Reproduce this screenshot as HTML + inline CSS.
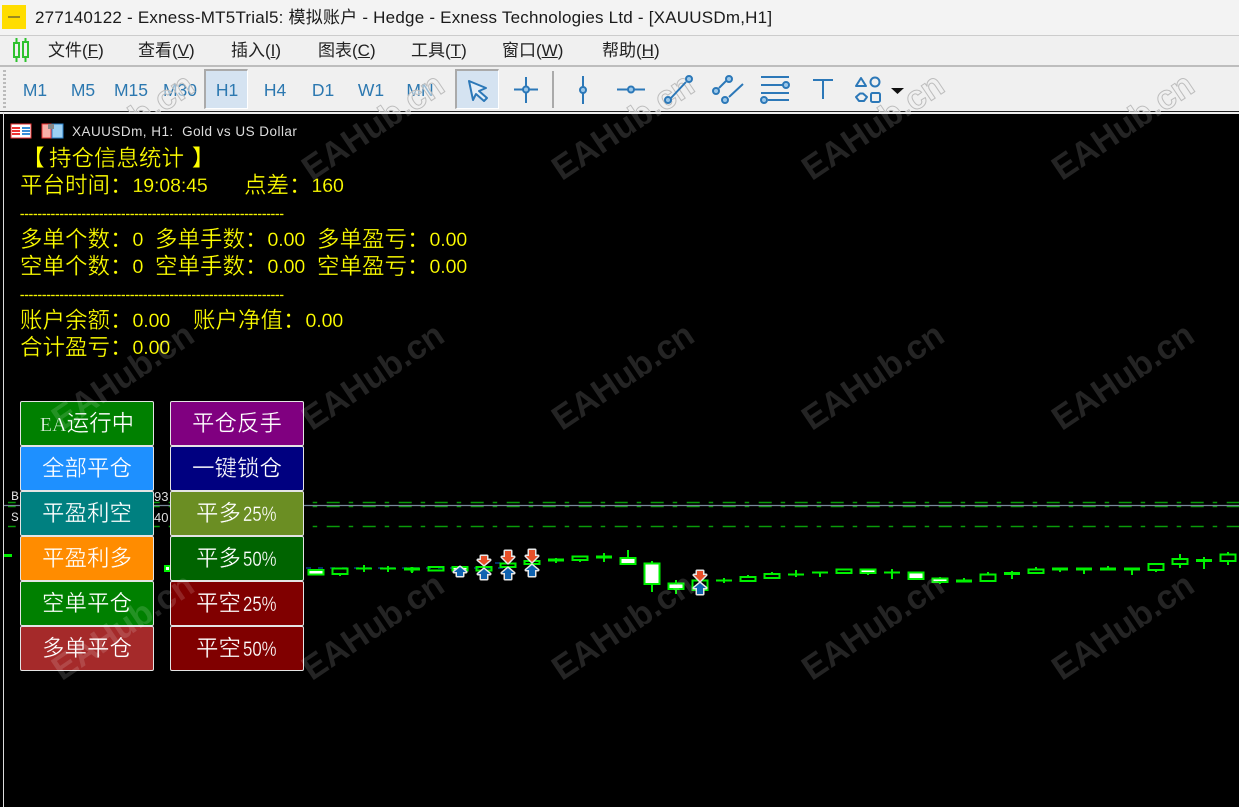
<!DOCTYPE html>
<html lang="zh"><head><meta charset="utf-8"><title>MT5</title>
<style>
html,body{margin:0;padding:0;background:#000}
#p{position:relative;width:1239px;height:807px;overflow:hidden;background:#000;font-family:"Liberation Sans","Noto Sans CJK SC",sans-serif}
#p div{position:absolute;white-space:nowrap}
.m{top:40px;font-size:17px;color:#222;line-height:22px}
.t{top:79px;width:44px;text-align:center;font-size:17.500px;line-height:22px;color:#2c78b0;margin-left:-22px}
.y{color:#ff0;font-size:22.500px;line-height:26px;font-family:"Noto Sans CJK SC",sans-serif;font-weight:400;-webkit-text-stroke:.3px #000}
.y i{font:400 19.500px/26px "Liberation Sans",sans-serif;letter-spacing:-.1px;-webkit-text-stroke:.15px #000;position:relative;top:-1px}
.y b{font-family:"Noto Sans CJK TC",sans-serif;font-weight:400}
.d{font:400 13px/26px "Liberation Sans",sans-serif;letter-spacing:.07px;color:#ee0;-webkit-text-stroke:.3px #ff0}
.b{box-sizing:border-box;width:134px;height:45px;border:1px solid #e4e4e4;border-radius:2px;color:#fff;text-align:center;font:400 22.500px/40px "Noto Sans CJK SC",sans-serif;-webkit-text-stroke:.35px var(--c);background:var(--c)}
.b i{display:inline-block;width:35px;text-align:left;transform:scaleX(.8);transform-origin:0 50%;font:400 21px/40px "Liberation Sans",sans-serif;-webkit-text-stroke:.25px var(--c);margin-left:2px}
.b u{text-decoration:none;font:400 20px/40px "Liberation Serif",serif}
.s{background:#d5e3f1;border-top:2px solid #aaa;border-left:2px solid #aaa;border-right:1px solid #fff;border-bottom:1px solid #fff;top:69px;width:41px;height:37px}
</style></head><body><div id="p">
<div style="left:0;top:0;width:1239px;height:111px;background:#f0f0f0"></div>
<div style="left:0;top:0;width:1239px;height:36px;background:#f3f3f3"></div>
<div style="left:0;top:35px;width:1239px;height:1px;background:#ccc"></div>
<div style="left:0;top:65px;width:1239px;height:2px;background:#bdbdbd"></div>
<div style="left:0;top:111px;width:1239px;height:1px;background:#222"></div>
<div style="left:0;top:112px;width:1239px;height:2px;background:#eee"></div>
<div style="left:3px;top:112px;width:1px;height:695px;background:#ddd"></div>

<div style="left:2px;top:5px;width:24px;height:24px;background:#ffdd00"></div>
<div style="left:8px;top:16px;width:12px;height:2px;background:#9a8a20"></div>
<div style="left:35px;top:5px;font-size:17px;line-height:26px;color:#1a1a1a;letter-spacing:.22px">277140122 - Exness-MT5Trial5: 模拟账户 - Hedge - Exness Technologies Ltd - [XAUUSDm,H1]</div>

<svg style="position:absolute;left:10px;top:38px" width="22" height="24" fill="none" stroke="#2ec22e" stroke-width="2"><rect x="4" y="5" width="5" height="14"/><rect x="13" y="4" width="5" height="15"/><path d="M6.500 0v5M6.500 19v5M15.500 0v4M15.500 19v5"/></svg>
<div class="m" style="left:48px">文件(<u>F</u>)</div>
<div class="m" style="left:138px">查看(<u>V</u>)</div>
<div class="m" style="left:231px">插入(<u>I</u>)</div>
<div class="m" style="left:318px">图表(<u>C</u>)</div>
<div class="m" style="left:411px">工具(<u>T</u>)</div>
<div class="m" style="left:502px">窗口(<u>W</u>)</div>
<div class="m" style="left:602px">帮助(<u>H</u>)</div>

<div class="s" style="left:204px"></div>
<div class="s" style="left:455px"></div>
<div style="left:3px;top:70px;width:3px;height:38px;background:repeating-linear-gradient(#bbb 0 2px,transparent 2px 4px)"></div>
<div class="t" style="left:35px">M1</div><div class="t" style="left:83px">M5</div><div class="t" style="left:131px">M15</div><div class="t" style="left:180px">M30</div><div class="t" style="left:227px">H1</div><div class="t" style="left:275px">H4</div><div class="t" style="left:323px">D1</div><div class="t" style="left:371px">W1</div><div class="t" style="left:420px">MN</div>
<div style="left:552px;top:71px;width:2px;height:37px;background:#aaa"></div>

<svg style="position:absolute;left:0;top:60px" width="1239" height="52" viewBox="0 60 1239 52" font-family="Liberation Sans,sans-serif" font-size="34" font-weight="700" fill="#f0f0f0" fill-opacity=".55" stroke="#bdbdbd" stroke-width="1" text-anchor="middle">
<text transform="translate(122 125) rotate(-34)" y="13">EAHub.cn</text><text transform="translate(372 125) rotate(-34)" y="13">EAHub.cn</text><text transform="translate(622 125) rotate(-34)" y="13">EAHub.cn</text><text transform="translate(872 125) rotate(-34)" y="13">EAHub.cn</text><text transform="translate(1122 125) rotate(-34)" y="13">EAHub.cn</text>
</svg>

<svg style="position:absolute;left:450px;top:60px" width="480" height="52" fill="none" stroke="#2c78b8" stroke-width="2">
<path d="M19 21l17 7-7 3 8 7-3 3-8-7-3 6z" stroke-linejoin="round" fill="#e3eef8"/>
<g fill="#9cc8ea">
<path d="M64 29.500h24M76 17v9M76 33v10"/><circle cx="76" cy="29.500" r="3"/>
<path d="M133 16v11M133 33v11"/><circle cx="133" cy="30" r="3"/>
<path d="M167 29.500h12M184 29.500h11"/><circle cx="181" cy="29.500" r="3"/>
<path d="M221 38l15-16"/><circle cx="218" cy="40" r="3"/><circle cx="239" cy="19" r="3"/>
<path d="M269 28l7-7M279 37l14-13"/><circle cx="266" cy="31" r="3"/><circle cx="279" cy="19" r="3"/><circle cx="275" cy="40" r="3"/>
<path d="M311 17h28M311 25h22M311 33h28M318 40h21"/><circle cx="336" cy="25" r="3"/><circle cx="314" cy="40" r="3"/>
</g>
<path d="M363 20h20M373 20v19"/>
<path d="M406 26l5-8 5 8z" stroke-linejoin="round"/><circle cx="425" cy="22" r="4.500"/><path d="M406 37l4-3.500h3l4 3.500-3 4h-5z" stroke-linejoin="round"/><rect x="421" y="33" width="9" height="9" rx="1.500"/>
<path d="M441 28h13l-6.500 6z" fill="#111" stroke="none"/>
</svg>

<!-- chart -->
<svg style="position:absolute;left:0;top:0" width="1239" height="807">
<g stroke="#0a9a0a" stroke-width="1.500" stroke-dasharray="13 9 4.500 9.500" stroke-dashoffset="5.300">
<path d="M8 502.500H1239M8 506.500H1239"/><path d="M8 526.500H1239"/>
</g>
<path d="M4 505.500H1239" stroke="#778899" stroke-width="1.300"/>
<path d="M306 568H505" stroke="#06408a" stroke-width="1.500" stroke-dasharray="5 7"/>
<path d="M495 563H505" stroke="#06408a" stroke-width="1.500" stroke-dasharray="5 6"/>
<g stroke="#00f000" fill="none" stroke-width="2">
<path d="M4 555.500H12" stroke-width="3"/>
<rect x="165" y="566" width="5" height="5" fill="#fff"/>
<rect x="308.500" y="570" width="15" height="4.500" fill="#fff"/>
<rect x="332.500" y="568.500" width="15" height="5.500"/><path d="M340 574v2"/>
<path d="M356 568.500h16M364 565v7M380 568.500h16M388 566v6"/>
<path d="M404 569h16M412 567v5" stroke-width="3"/><path d="M412 570v3"/>
<rect x="428.500" y="567" width="15" height="3.500"/>
<rect x="452.500" y="567" width="15" height="3.500" fill="#fff"/>
<rect x="476.500" y="567" width="15" height="3.500"/>
<rect x="500.500" y="563.500" width="15" height="3.500"/>
<rect x="524.500" y="561" width="15" height="3"/>
<path d="M548 560h16" stroke-width="3"/><path d="M556 558v5"/>
<rect x="572.500" y="556.500" width="15" height="3.500"/><path d="M580 560v2"/>
<path d="M596 557h16" stroke-width="3"/><path d="M604 553v9"/>
<rect x="620.500" y="558" width="15" height="6" fill="#fff"/><path d="M628 550v8"/>
<rect x="644.500" y="563.500" width="15" height="20.500" fill="#fff"/><path d="M652 561v2M652 584v8"/>
<rect x="668.500" y="583.500" width="15" height="5.500" fill="#fff"/><path d="M676 580v3M676 589v5"/>
<rect x="692.500" y="580.500" width="15" height="9.500"/>
<path d="M716 580.500h16M724 578v5"/>
<rect x="740.500" y="577" width="15" height="4"/><path d="M748 575v2"/>
<rect x="764.500" y="574" width="15" height="4"/><path d="M772 572v2"/>
<path d="M788 574.500h16M796 570v7"/>
<path d="M812 572.500h16M820 572v5"/>
<rect x="836.500" y="569.500" width="15" height="3.500"/>
<rect x="860.500" y="569.500" width="15" height="3.500" fill="#fff"/><path d="M868 573v2"/>
<path d="M884 572.500h16M892 569v10"/>
<rect x="908.500" y="572.500" width="15" height="6.500" fill="#fff"/>
<rect x="932.500" y="578.500" width="15" height="3.500" fill="#fff"/><path d="M940 577v1M940 582v2"/>
<path d="M956 581h16" stroke-width="3"/><path d="M964 578v2"/>
<rect x="980.500" y="574.500" width="15" height="6.500"/><path d="M988 572v2"/>
<path d="M1004 573.500h16" stroke-width="3"/><path d="M1012 571v8"/>
<rect x="1028.500" y="569.500" width="15" height="3.500"/><path d="M1036 567v2"/>
<path d="M1052 569h16M1076 569h16M1100 569h16M1124 569h16" stroke-width="3"/><path d="M1060 569v3M1084 569v5M1108 566v3M1132 569v6"/>
<rect x="1148.500" y="564" width="15" height="6"/><path d="M1156 570v2"/>
<rect x="1172.500" y="559" width="15" height="5"/><path d="M1180 554v5M1180 564v4"/>
<path d="M1196 560.500h16" stroke-width="3"/><path d="M1204 557v12"/>
<rect x="1220.500" y="554.500" width="15" height="6.500"/><path d="M1228 552v2M1228 561v4"/>
</g>
<g stroke="#e8e8e8" stroke-width="3" stroke-linejoin="round" paint-order="stroke">
<g fill="#0f62b0"><path d="M460 567l6 5h-3v4h-6v-4h-3z"/><path d="M484 569l6 5h-3v5h-6v-5h-3z"/><path d="M508 568l6 5h-3v6h-6v-6h-3z"/><path d="M532 565l6 5h-3v6h-6v-6h-3z"/><path d="M700 583l6 5h-3v6h-6v-6h-3z"/></g>
<g fill="#e8502a"><path d="M481 556h6v4h3l-6 5-6-5h3z"/><path d="M505 551h6v6h3l-6 6-6-6h3z"/><path d="M529 550h6v6h3l-6 6-6-6h3z"/><path d="M697 571h6v4h3l-6 6-6-6h3z"/></g>
</g>
</svg>

<div style="left:11px;top:490px;color:#ddd;font:13px/14px 'Liberation Mono',monospace">B</div>
<div style="left:11px;top:511px;color:#ddd;font:13px/14px 'Liberation Mono',monospace">S</div>
<div style="left:154px;top:490px;color:#ddd;font:13px/14px 'Liberation Sans',sans-serif">93</div>
<div style="left:154px;top:511px;color:#ddd;font:13px/14px 'Liberation Sans',sans-serif">40</div>

<svg style="position:absolute;left:10px;top:123px" width="55" height="16"><rect x="1" y="1" width="20" height="14" fill="#fff" stroke="#e33"/><path d="M2 5h8M2 8h8M2 11h8" stroke="#e33" stroke-width="2"/><path d="M12 5h8M12 8h8M12 11h8" stroke="#3a8fd8" stroke-width="2"/><rect x="32" y="1" width="9" height="14" fill="#f7b0a8" stroke="#e33"/><rect x="42" y="1" width="11" height="14" fill="#9cd0f2" stroke="#2a80c8"/><rect x="38" y="1" width="6" height="5" fill="#888"/></svg>
<div style="left:72px;top:123px;color:#ddd;font-size:13.500px;line-height:17px;letter-spacing:.47px">XAUUSDm, H1:&nbsp; Gold vs US Dollar</div>

<div class="y" style="left:22px;top:144px;-webkit-text-stroke:0">【</div><div class="y" style="left:49px;top:144px">持仓信息统计</div><div class="y" style="left:192px;top:144px;-webkit-text-stroke:0">】</div>
<div class="y" style="left:20px;top:171px">平台时间<b>：</b><i>19:08:45</i></div><div class="y" style="left:244px;top:171px">点差<b>：</b><i>160</i></div>
<div class="d" style="left:20px;top:201px">------------------------------------------------------------</div>
<div class="y" style="left:20px;top:225px">多单个数<b>：</b><i>0</i></div><div class="y" style="left:155px;top:225px">多单手数<b>：</b><i>0.00</i></div><div class="y" style="left:317px;top:225px">多单盈亏<b>：</b><i>0.00</i></div>
<div class="y" style="left:20px;top:252px">空单个数<b>：</b><i>0</i></div><div class="y" style="left:155px;top:252px">空单手数<b>：</b><i>0.00</i></div><div class="y" style="left:317px;top:252px">空单盈亏<b>：</b><i>0.00</i></div>
<div class="d" style="left:20px;top:282px">------------------------------------------------------------</div>
<div class="y" style="left:20px;top:306px">账户余额<b>：</b><i>0.00</i></div><div class="y" style="left:193px;top:306px">账户净值<b>：</b><i>0.00</i></div>
<div class="y" style="left:20px;top:333px">合计盈亏<b>：</b><i>0.00</i></div>

<div class="b" style="left:20px;top:401px;--c:#008000"><u>EA</u>运行中</div>
<div class="b" style="left:20px;top:446px;--c:#1e90ff">全部平仓</div>
<div class="b" style="left:20px;top:491px;--c:#008080">平盈利空</div>
<div class="b" style="left:20px;top:536px;--c:#ff8c00">平盈利多</div>
<div class="b" style="left:20px;top:581px;--c:#008000">空单平仓</div>
<div class="b" style="left:20px;top:626px;--c:#a52a2a">多单平仓</div>
<div class="b" style="left:170px;top:401px;--c:#800080">平仓反手</div>
<div class="b" style="left:170px;top:446px;--c:#000080">一键锁仓</div>
<div class="b" style="left:170px;top:491px;--c:#6b8e23">平多<i>25%</i></div>
<div class="b" style="left:170px;top:536px;--c:#006400">平多<i>50%</i></div>
<div class="b" style="left:170px;top:581px;--c:#800000">平空<i>25%</i></div>
<div class="b" style="left:170px;top:626px;--c:#800000">平空<i>50%</i></div>

<svg style="position:absolute;left:0;top:114px" width="1239" height="693" viewBox="0 114 1239 693" font-family="Liberation Sans,sans-serif" font-size="34" font-weight="700" fill="#fff" fill-opacity=".14" text-anchor="middle">
<text transform="translate(372 125) rotate(-34)" y="13">EAHub.cn</text><text transform="translate(622 125) rotate(-34)" y="13">EAHub.cn</text><text transform="translate(872 125) rotate(-34)" y="13">EAHub.cn</text><text transform="translate(1122 125) rotate(-34)" y="13">EAHub.cn</text>
<text transform="translate(122 375) rotate(-34)" y="13">EAHub.cn</text><text transform="translate(372 375) rotate(-34)" y="13">EAHub.cn</text><text transform="translate(622 375) rotate(-34)" y="13">EAHub.cn</text><text transform="translate(872 375) rotate(-34)" y="13">EAHub.cn</text><text transform="translate(1122 375) rotate(-34)" y="13">EAHub.cn</text>
<text transform="translate(122 625) rotate(-34)" y="13">EAHub.cn</text><text transform="translate(372 625) rotate(-34)" y="13">EAHub.cn</text><text transform="translate(622 625) rotate(-34)" y="13">EAHub.cn</text><text transform="translate(872 625) rotate(-34)" y="13">EAHub.cn</text><text transform="translate(1122 625) rotate(-34)" y="13">EAHub.cn</text>
</svg>
</div></body></html>
